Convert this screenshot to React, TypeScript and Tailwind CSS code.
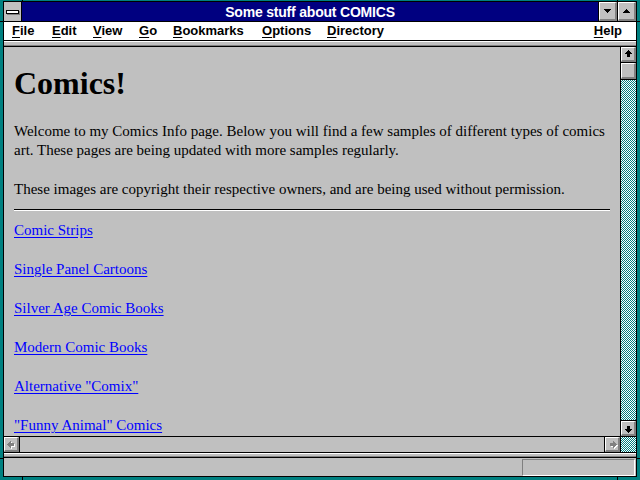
import React from "react";

// Win 3.1 style raised face: white highlight top/left, dark shadow bottom/right
function Face({ className = "", children }: { className?: string; children?: React.ReactNode }) {
  return (
    <div
      className={`relative bg-[#c0c0c0] border-t border-l border-t-white border-l-white border-b-2 border-r-2 border-b-[#808080] border-r-[#808080] ${className}`}
    >
      {children}
    </div>
  );
}

// Block arrow drawn pixel by pixel inside a 15x15 cell
function Arrow({ dir, disabled = false }: { dir: "up" | "down" | "left" | "right"; disabled?: boolean }) {
  const up: [number, number, number, number][] = [
    [7, 3, 1, 1],
    [6, 4, 3, 1],
    [5, 5, 5, 1],
    [4, 6, 7, 1],
    [6, 7, 3, 3],
  ];
  const map = (r: [number, number, number, number]): [number, number, number, number] => {
    const [x, y, w, h] = r;
    if (dir === "up") return [x, y, w, h];
    if (dir === "down") return [x, 14 - y - h + 1, w, h];
    if (dir === "left") return [y, x, h, w];
    return [14 - y - h + 1, x, h, w];
  };
  const rects = up.map(map);
  return (
    <svg width="15" height="15" viewBox="0 0 15 15" shapeRendering="crispEdges" className="absolute -left-px -top-px">
      {disabled &&
        rects.map(([x, y, w, h], i) => <rect key={"s" + i} x={x + 1} y={y + 1} width={w} height={h} fill="#ffffff" />)}
      {rects.map(([x, y, w, h], i) => (
        <rect key={i} x={x} y={y} width={w} height={h} fill={disabled ? "#808080" : "#000000"} />
      ))}
    </svg>
  );
}

function Tri({ dir }: { dir: "up" | "down" }) {
  const rows = dir === "down" ? [7, 5, 3, 1] : [1, 3, 5, 7];
  return (
    <svg width="17" height="18" viewBox="0 0 17 18" shapeRendering="crispEdges" className="absolute -left-px -top-px">
      {rows.map((w, i) => (
        <rect key={i} x={(17 - w) / 2 - 0.5} y={7 + i} width={w} height={1} fill="#000" />
      ))}
    </svg>
  );
}

const checker =
  "bg-[image:repeating-conic-gradient(#008080_0%_25%,#ffffff_0%_50%)] bg-[length:2px_2px]";

const menus: { label: string; w: string }[] = [
  { label: "File", w: "w-[40px]" },
  { label: "Edit", w: "w-[41px]" },
  { label: "View", w: "w-[46px]" },
  { label: "Go", w: "w-[34px]" },
  { label: "Bookmarks", w: "w-[89px]" },
  { label: "Options", w: "w-[65px]" },
  { label: "Directory", w: "w-[90px]" },
];

const links = [
  "Comic Strips",
  "Single Panel Cartoons",
  "Silver Age Comic Books",
  "Modern Comic Books",
  'Alternative "Comix"',
  '"Funny Animal" Comics',
];

export default function App() {
  return (
    <div className="relative w-[640px] h-[480px] bg-[#008080] pt-px pl-[3px] pr-[3px] pb-[3px] font-['Liberation_Sans',Arial,sans-serif] overflow-hidden">
      {/* resize-frame notches */}
      <div className="absolute left-[22px] top-0 w-px h-px bg-black" />
      <div className="absolute left-[617px] top-0 w-px h-px bg-black" />
      <div className="absolute left-[22px] bottom-0 w-px h-[3px] bg-black" />
      <div className="absolute left-[617px] bottom-0 w-px h-[3px] bg-black" />
      <div className="absolute left-0 top-[21px] w-[3px] h-px bg-black" />
      <div className="absolute left-0 top-[458px] w-[3px] h-px bg-black" />
      <div className="absolute right-0 top-[21px] w-[3px] h-px bg-black" />
      <div className="absolute right-0 top-[458px] w-[3px] h-px bg-black" />

      <div className="h-full border border-black flex flex-col bg-[#c0c0c0]">
        {/* title bar */}
        <div className="h-[19px] shrink-0 flex border-b border-black box-content">
          <div className="w-[17px] h-full bg-[#c0c0c0] border-r border-black box-content relative">
            <div className="absolute left-[2px] top-[8px] w-[13px] h-[4px] bg-white border border-black shadow-[1px_1px_0_#808080]" />
          </div>
          <div className="flex-1 bg-[#000080] text-white font-bold text-[14px] leading-[19px] tracking-[-0.2px] text-center pt-px">
            Some stuff about COMICS
          </div>
          <div className="border-l border-black">
            <Face className="w-[18px] h-[19px]">
              <Tri dir="down" />
            </Face>
          </div>
          <div className="border-l border-black">
            <Face className="w-[18px] h-[19px]">
              <Tri dir="up" />
            </Face>
          </div>
        </div>

        {/* menu bar */}
        <div className="h-[18px] shrink-0 bg-white border-b border-black box-content flex items-start pl-[8px] pr-[14px] text-[13px] leading-[18px] font-bold text-black">
          {menus.map((m) => (
            <div key={m.label} className={m.w}>
              <span className="underline underline-offset-[2px]">{m.label[0]}</span>
              {m.label.slice(1)}
            </div>
          ))}
          <div className="flex-1" />
          <div>
            <span className="underline underline-offset-[2px]">H</span>elp
          </div>
        </div>

        {/* separator strip */}
        <div className="h-[5px] shrink-0 border-t border-t-white border-b border-b-[#808080] bg-[#c0c0c0]" />
        <div className="h-px shrink-0 bg-black" />

        {/* document + vertical scroll bar */}
        <div className="flex-1 flex min-h-0">
          <div className="flex-1 overflow-hidden bg-[#c0c0c0] px-[10px] font-['Liberation_Serif',serif] text-black">
            <h1 className="mt-[20px] text-[32px] leading-[32px] font-bold">Comics!</h1>
            <p className="mt-[23px] text-[15px] leading-[19px] whitespace-nowrap">
              Welcome to my Comics Info page. Below you will find a few samples of different types of comics
              <br />
              art. These pages are being updated with more samples regularly.
            </p>
            <p className="mt-[20px] text-[15px] leading-[19px] whitespace-nowrap">
              These images are copyright their respective owners, and are being used without permission.
            </p>
            <div className="mt-[10px] h-[2px] border-t border-t-black border-b border-b-white" />
            {links.map((l, i) => (
              <p
                key={l}
                className={`${i === 0 ? "mt-[10px]" : "mt-[20px]"} text-[15px] leading-[19px] whitespace-nowrap`}
              >
                <a href="#" className="text-[#0000ff] underline underline-offset-[2px]">
                  {l}
                </a>
              </p>
            ))}
          </div>

          <div className="w-[16px] border-l border-black flex flex-col">
            <Face className="h-[15px] w-[15px] shrink-0">
              <Arrow dir="up" />
            </Face>
            <div className="h-px shrink-0 bg-black" />
            <Face className="h-[16px] w-[15px] shrink-0 border-r border-b" />
            <div className="h-px shrink-0 bg-black" />
            <div className={`flex-1 ${checker}`} />
            <div className="h-px shrink-0 bg-black" />
            <Face className="h-[15px] w-[15px] shrink-0">
              <Arrow dir="down" />
            </Face>
          </div>
        </div>

        {/* horizontal scroll bar */}
        <div className="h-[15px] shrink-0 box-content border-t border-b border-black flex">
          <Face className="w-[15px] h-[15px]">
            <Arrow dir="left" disabled />
          </Face>
          <div className="flex-1 border-l border-r border-black bg-[#c0c0c0]" />
          <Face className="w-[15px] h-[15px]">
            <Arrow dir="right" disabled />
          </Face>
          <div className={`w-[16px] border-l border-black ${checker}`} />
        </div>

        {/* separator strip */}
        <div className="h-[4px] shrink-0 border-t border-t-white border-b border-b-[#808080] bg-[#c0c0c0]" />
        <div className="h-px shrink-0 bg-black" />

        {/* status bar */}
        <div className="h-[18px] shrink-0 flex justify-end items-start pt-px pr-px bg-[#c0c0c0]">
          <div className="w-[113px] h-[17px] border-t border-l border-t-[#808080] border-l-[#808080] border-b border-r border-b-white border-r-white" />
        </div>
      </div>
    </div>
  );
}
